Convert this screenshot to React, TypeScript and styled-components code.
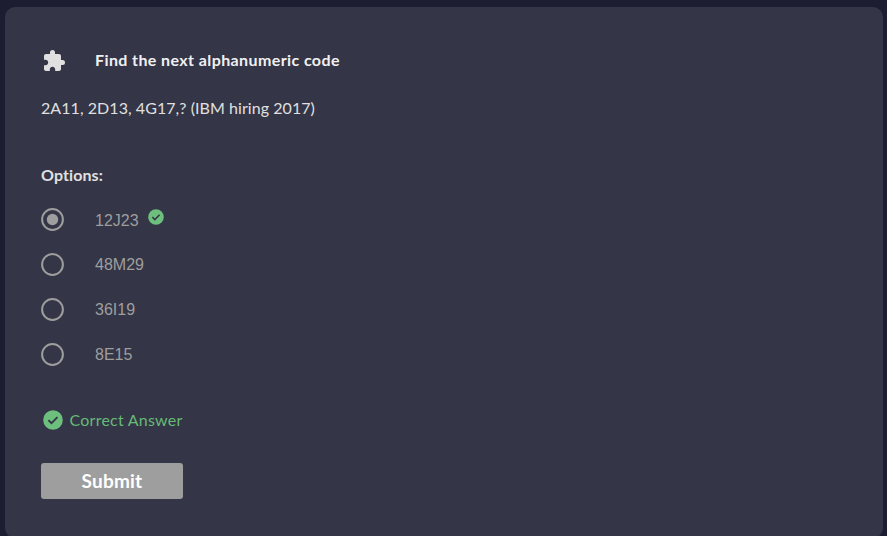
import React from "react";
import styled, { createGlobalStyle } from "styled-components";

const GlobalStyle = createGlobalStyle`
  * { box-sizing: border-box; }
  html, body { margin: 0; background: #1c1d30; }
`;

const Page = styled.main`
  height: 100vh;
  overflow: hidden;
  padding: 7px 4px 0 5px;
  font-family: Lato, "Open Sans", sans-serif;
  font-size: 16px;
  line-height: 24px;
  color: #e0e0e0;
`;

const Card = styled.section`
  height: 531px;
  padding: 41px 36px 0;
  border-radius: 10px;
  background: #343546;
`;

const Header = styled.header`
  display: flex;
  align-items: center;
  height: 24px;
  gap: 29px;
  padding-left: 1px;
  svg { display: block; margin-top: 2px; }
`;

const Title = styled.h1`
  margin: 0;
  font-size: 16px;
  font-weight: 700;
  letter-spacing: 0.4px;
  color: #f0f0f2;
`;

const Question = styled.p`
  margin: 24px 0 0;
  letter-spacing: 0.06px;
`;

const OptionsLabel = styled.h2`
  margin: 43px 0 0;
  font-size: 16px;
  font-weight: 700;
  letter-spacing: 0.1px;
`;

const OptionList = styled.div`
  display: flex;
  flex-direction: column;
  margin-top: 10px;
`;

const Option = styled.label`
  display: flex;
  align-items: center;
  height: 45px;
  color: #9e9e9e;
  font-family: "Liberation Sans", Arial, sans-serif;
`;

const Code = styled.span<{ $selected: boolean }>`
  padding-top: ${({ $selected }) => ($selected ? "2px" : "0")};
`;

const Radio = styled.svg`
  display: block;
  width: 23px;
  height: 23px;
  margin-right: 31px;
`;

const Mark = styled.span`
  display: flex;
  margin: 0 0 5px 9px;
`;

const Result = styled.div`
  display: flex;
  align-items: center;
  height: 24px;
  margin: 31px 0 0 1.5px;
  gap: 7px;
  color: #66bb76;
  letter-spacing: 0.24px;
`;

const Submit = styled.button`
  display: block;
  width: 142px;
  height: 36px;
  margin-top: 31px;
  padding: 0;
  border: 0;
  border-radius: 3px;
  background: #9e9e9e;
  color: #fff;
  font: 700 19px/36px Lato, sans-serif;
  letter-spacing: 0.2px;
`;

const CheckIcon = ({ size }: { size: number }) => (
  <svg width={size} height={size} viewBox="0 0 20 20">
    <circle cx="10" cy="10" r="9.8" fill="#6dbf7d" />
    <path d="M5.4 10.1l3.1 3.1 6-6" fill="none" stroke="#343546" strokeWidth="1.9" />
  </svg>
);

const PuzzleIcon = () => (
  <svg width="24" height="24" viewBox="0 0 24 24" fill="#e0e0e0">
    <path d="M20.5 11H19V7c0-1.1-.9-2-2-2h-4V3.500a2.500 2.500 0 0 0-5 0V5H4c-1.100 0-1.990.9-1.990 2v3.800H3.500c1.490 0 2.700 1.210 2.700 2.700s-1.210 2.700-2.700 2.700H2V20c0 1.100.9 2 2 2h3.800v-1.500c0-1.490 1.210-2.700 2.700-2.700s2.700 1.210 2.700 2.700V22H17c1.100 0 2-.9 2-2v-4h1.500a2.500 2.500 0 0 0 0-5z" />
  </svg>
);

const options = [
  { code: "12J23", selected: true },
  { code: "48M29", selected: false },
  { code: "36I19", selected: false },
  { code: "8E15", selected: false },
];

export default function App() {
  return (
    <>
      <GlobalStyle />
      <Page>
        <Card>
          <Header>
            <PuzzleIcon />
            <Title>Find the next alphanumeric code</Title>
          </Header>
          <Question>2A11, 2D13, 4G17,? (IBM hiring 2017)</Question>
          <OptionsLabel>Options:</OptionsLabel>
          <OptionList>
            {options.map(({ code, selected }) => (
              <Option key={code}>
                <Radio viewBox="0 0 23 23">
                  <circle cx="11.5" cy="11.5" r="10.400" fill="none" stroke="#9e9e9e" strokeWidth="2" />
                  {selected && <circle cx="11.5" cy="11.5" r="5.700" fill="#9e9e9e" />}
                </Radio>
                <Code $selected={selected}>{code}</Code>
                {selected && (
                  <Mark>
                    <CheckIcon size={16} />
                  </Mark>
                )}
              </Option>
            ))}
          </OptionList>
          <Result>
            <CheckIcon size={20} />
            Correct Answer
          </Result>
          <Submit type="button">Submit</Submit>
        </Card>
      </Page>
    </>
  );
}
